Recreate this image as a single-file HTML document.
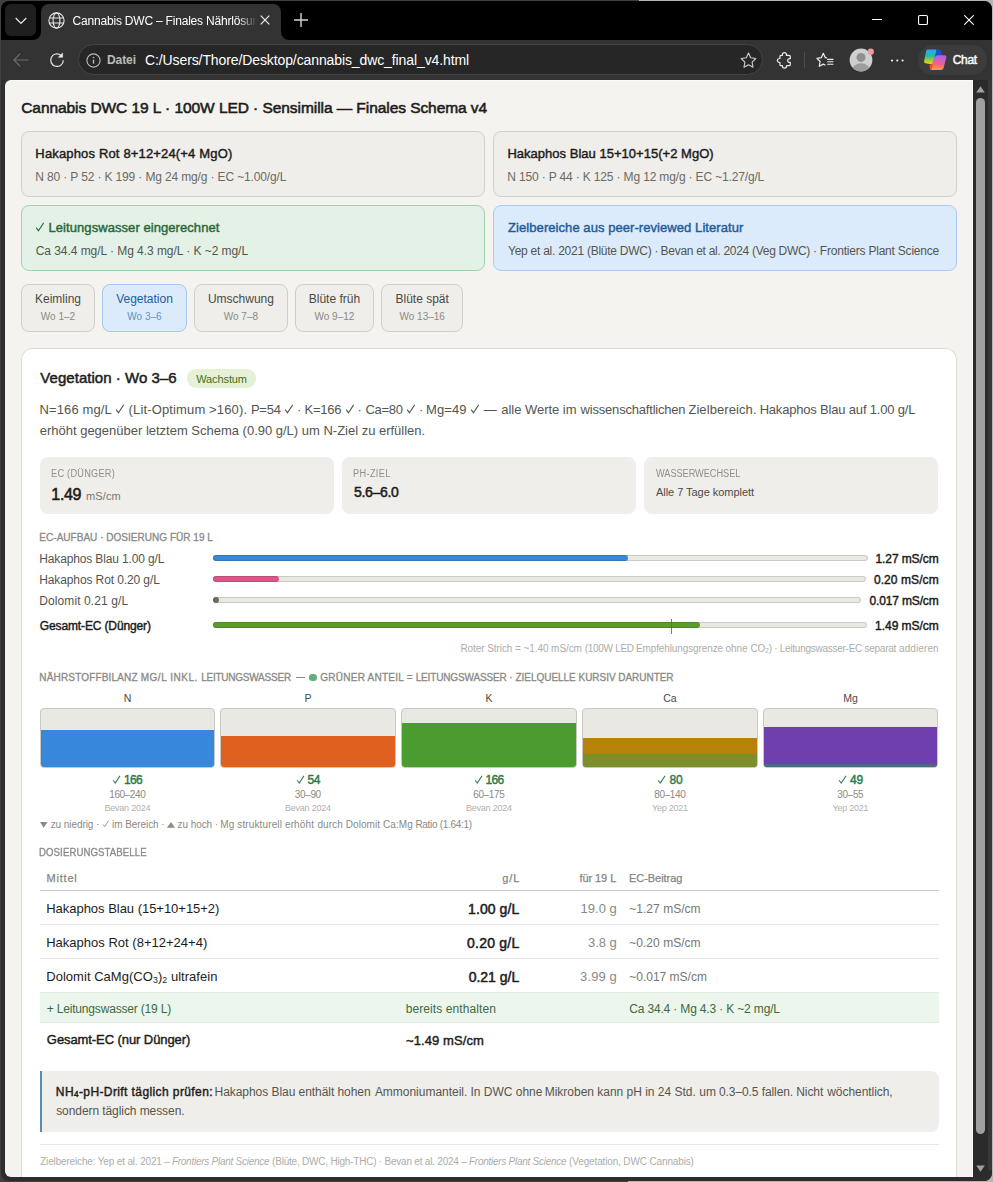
<!DOCTYPE html>
<html lang="de"><head><meta charset="utf-8"><title>Cannabis DWC – Finales Nährlösungsschema</title>
<style>
html,body{margin:0;padding:0;width:993px;height:1182px;overflow:hidden;background:#404040;}
#root{position:relative;width:993px;height:1182px;overflow:hidden;background:linear-gradient(90deg,#404040 0,#404040 639px,#b4b4b4 639px,#b4b4b4 100%);font-family:"Liberation Sans", sans-serif;}
.t{position:absolute;white-space:pre;font-family:"Liberation Sans", sans-serif;}
.ck{display:inline-block;width:0.74em;height:0.78em;vertical-align:-0.02em;overflow:visible}
sub.s{font-size:0.68em;vertical-align:-0.18em;line-height:0;}
</style></head>
<body>
<div id="root">
<div style="position:absolute;left:1px;top:1.2px;width:990.7px;height:1179.5px;border-radius:8px;background:#383838;overflow:hidden"></div>
<div style="position:absolute;left:628.00px;top:1180.50px;width:12.00px;height:1.50px;box-sizing:border-box;background:#b4b4b4;"></div>
<div style="position:absolute;left:1px;top:1.2px;width:990.7px;height:38.8px;border-radius:8px 8px 0 0;background:#000"></div>
<div style="position:absolute;left:1.00px;top:40.00px;width:990.70px;height:40.00px;box-sizing:border-box;background:#333333;"></div>
<div style="position:absolute;left:1.00px;top:80.00px;width:4.00px;height:1092.00px;box-sizing:border-box;background:#2f2f2f;"></div>
<div style="position:absolute;left:1px;top:1170px;width:990.7px;height:10.7px;border-radius:0 0 8px 8px;background:#2c2c2c"></div>
<div style="position:absolute;left:5.00px;top:4.00px;width:31.00px;height:32.00px;box-sizing:border-box;background:#1f1f1f;border-radius:6px;"></div>
<svg style="position:absolute;left:14.5px;top:16.5px" width="12" height="8" viewBox="0 0 12 8"><path d="M0.7 1 L6 6.4 L11.3 1" fill="none" stroke="#e6e6e6" stroke-width="1.25"/></svg>
<div style="position:absolute;left:41px;top:4px;width:240px;height:37px;background:#333333;border-radius:8px 8px 0 0"></div>
<svg style="position:absolute;left:33px;top:32px" width="8" height="8" viewBox="0 0 8 8"><path d="M8 0 L8 8 L0 8 A8 8 0 0 0 8 0Z" fill="#333333"/></svg>
<svg style="position:absolute;left:281px;top:32px" width="8" height="8" viewBox="0 0 8 8"><path d="M0 0 L0 8 L8 8 A8 8 0 0 1 0 0Z" fill="#333333"/></svg>
<svg style="position:absolute;left:48px;top:12px" width="17" height="17" viewBox="0 0 17 17" fill="none" stroke="#e8e8e8" stroke-width="1.1"><circle cx="8.5" cy="8.5" r="7.6"/><ellipse cx="8.5" cy="8.5" rx="3.4" ry="7.6"/><path d="M1.4 6 H15.6 M1.4 11 H15.6"/></svg>
<div class="t" style="top:15px;font-size:12px;line-height:12px;color:#ffffff;left:72.59px;width:184px;overflow:hidden;-webkit-mask-image:linear-gradient(90deg,#000 166px,transparent 184px);mask-image:linear-gradient(90deg,#000 166px,transparent 184px);letter-spacing:-0.2px;"><span id="tabt">Cannabis DWC – Finales</span> Nährlösungsschema</div>
<svg style="position:absolute;left:260px;top:15.2px" width="10" height="10" viewBox="0 0 10 10"><path d="M0.7 0.7 L9.3 9.3 M9.3 0.7 L0.7 9.3" stroke="#f0f0f0" stroke-width="1.2"/></svg>
<svg style="position:absolute;left:294px;top:13px" width="14" height="14" viewBox="0 0 14 14"><path d="M7 0 V14 M0 7 H14" stroke="#d4d4d4" stroke-width="1.4"/></svg>
<div style="position:absolute;left:872.00px;top:18.80px;width:10.00px;height:1.20px;box-sizing:border-box;background:#fff;"></div>
<svg style="position:absolute;left:918px;top:15px" width="10" height="10" viewBox="0 0 10 10"><rect x="0.55" y="0.55" width="8.9" height="8.9" rx="1.3" fill="none" stroke="#fff" stroke-width="1.1"/></svg>
<svg style="position:absolute;left:964px;top:15px" width="10" height="10" viewBox="0 0 10 10"><path d="M0.3 0.3 L9.7 9.7 M9.7 0.3 L0.3 9.7" stroke="#fff" stroke-width="1.1"/></svg>
<svg style="position:absolute;left:13px;top:53px" width="16" height="14" viewBox="0 0 16 14" fill="none" stroke="#6e6e6e" stroke-width="1.2"><path d="M7.2 0.6 L0.9 7 L7.2 13.4 M0.9 7 H15.6"/></svg>
<svg style="position:absolute;left:49px;top:52px" width="16" height="16" viewBox="0 0 16 16" fill="none" stroke="#e9e9e9" stroke-width="1.2"><path d="M14.3 8.2 A6.3 6.3 0 1 1 11.9 3.2"/><path d="M13.6 1.0 V5.2 H9.4 Z" fill="#e9e9e9" stroke-width="0.6" stroke-linejoin="round"/></svg>
<div style="position:absolute;left:77.80px;top:44.20px;width:685.60px;height:31.00px;box-sizing:border-box;background:#262626;border:1px solid #454545;border-radius:15.5px;"></div>
<svg style="position:absolute;left:85.5px;top:52.5px" width="15" height="15" viewBox="0 0 15 15" fill="none" stroke="#bcbcbc" stroke-width="1.1"><circle cx="7.5" cy="7.5" r="6.6"/><path d="M7.5 6.7 V10.6" stroke-width="1.4"/><circle cx="7.5" cy="4.5" r="0.8" fill="#bcbcbc" stroke="none"/></svg>
<div class="t" style="letter-spacing:-0.073px;top:54px;font-size:12px;line-height:12px;color:#bdbdbd;font-weight:700;left:107.00px;">Datei</div>
<div class="t" style="letter-spacing:-0.104px;top:53px;font-size:14px;line-height:14px;color:#ffffff;left:144.99px;">C:/Users/Thore/Desktop/cannabis_dwc_final_v4.html</div>
<svg style="position:absolute;left:739.5px;top:51.6px" width="17" height="17" viewBox="0 0 17 17" fill="none" stroke="#cdcdcd" stroke-width="1.1" stroke-linejoin="round"><path d="M8.5 1.1 L10.7 5.8 L15.8 6.5 L12.1 10.1 L13 15.2 L8.5 12.7 L4 15.2 L4.9 10.1 L1.2 6.5 L6.3 5.8 Z"/></svg>
<svg style="position:absolute;left:776px;top:51px" width="17" height="18" viewBox="0 0 17 18" fill="none" stroke="#ececec" stroke-width="1.2" stroke-linejoin="round"><path d="M6.4 4.3 V3.6 a2 2 0 0 1 4 0 V4.3 H13 a1.3 1.3 0 0 1 1.3 1.3 V7.6 H13.6 a1.9 1.9 0 0 0 0 3.8 H14.3 V13.4 a1.3 1.3 0 0 1 -1.3 1.3 H10.6 V15 a2.1 2.1 0 0 1 -4.2 0 V14.7 H5.2 a1.3 1.3 0 0 1 -1.3 -1.3 V11.5 H3.4 a2 2 0 0 1 0 -4 H3.9 V5.6 A1.3 1.3 0 0 1 5.2 4.3 Z"/></svg>
<div style="position:absolute;left:804.20px;top:52.00px;width:1.00px;height:16.00px;box-sizing:border-box;background:#4c4c4c;"></div>
<svg style="position:absolute;left:816px;top:51.5px" width="18" height="17" viewBox="0 0 18 17" fill="none" stroke="#ececec" stroke-width="1.2" stroke-linejoin="round" stroke-linecap="round"><path d="M10.6 5.9 L9.3 5.7 L7.3 1.3 L5.3 5.7 L0.9 6.3 L4.1 9.5 L3.3 14.3 L7.3 12.1 L9 13"/><path d="M11.6 7.4 H17 M11.6 9.8 H17 M11.6 12.2 H17" stroke-width="1.1"/></svg>
<svg style="position:absolute;left:849px;top:48px" width="25" height="24" viewBox="0 0 25 24"><defs><clipPath id="pc"><circle cx="12" cy="12" r="11.4"/></clipPath></defs><circle cx="12" cy="12" r="11.4" fill="#cfcfcf"/><g clip-path="url(#pc)"><circle cx="12" cy="9.4" r="4.5" fill="#8f8f8f"/><ellipse cx="12" cy="21.8" rx="8.6" ry="6.6" fill="#9d9d9d"/></g><circle cx="21.8" cy="3.7" r="3.1" fill="#f09c9c"/></svg>
<svg style="position:absolute;left:889.8px;top:58.5px" width="15" height="3" viewBox="0 0 15 3" fill="#f0f0f0"><circle cx="2" cy="1.5" r="1.1"/><circle cx="7.3" cy="1.5" r="1.1"/><circle cx="12.6" cy="1.5" r="1.1"/></svg>
<div style="position:absolute;left:918.00px;top:45.00px;width:69.40px;height:29.50px;box-sizing:border-box;background:#3c3c3c;border-radius:15px;"></div>
<svg style="position:absolute;left:918px;top:44px" width="32" height="32" viewBox="0 0 32 32"><defs><linearGradient id="cg1" x1="0" y1="0" x2="0" y2="1"><stop offset="0" stop-color="#2aa4f8"/><stop offset="0.45" stop-color="#22c0a0"/><stop offset="0.7" stop-color="#9ccc30"/><stop offset="1" stop-color="#f5d020"/></linearGradient><linearGradient id="cg2" x1="0.3" y1="0" x2="0.1" y2="1"><stop offset="0" stop-color="#b060ea"/><stop offset="0.5" stop-color="#f0608e"/><stop offset="1" stop-color="#ffa23c"/></linearGradient></defs><path d="M17 5.5 H21 Q22.8 5.6 23.2 7.4 L24.2 11.6 L19 12 L16 14 Z" fill="#1b50c8"/><path d="M9.6 5.6 H17.4 Q18.6 5.6 18.3 6.9 L15.1 18.9 Q14.7 20.4 13.2 20.2 L7.3 19.3 Q5.7 18.8 6.1 17 L8.1 7.2 Q8.5 5.6 9.6 5.6 Z" fill="url(#cg1)"/><path d="M19.6 11.3 H26.6 Q28.8 11.5 28.3 13.6 L25.6 24 Q25 26 23 26 H13.6 Q12 26 12.2 24 L16.6 13.4 Q17.5 11.5 19.6 11.3Z" fill="url(#cg2)"/><path d="M11.8 20.4 L15.2 20 L13.6 26 Q11.6 25.7 11.7 23.6Z" fill="#f0502e"/></svg>
<div class="t" style="letter-spacing:-0.361px;top:54px;font-size:12px;line-height:12px;color:#ffffff;-webkit-text-stroke:0.42px currentColor;left:952.80px;">Chat</div>
<div style="position:absolute;left:5px;top:80px;width:968px;height:1097px;background:#f4f3ef;border-radius:6px 0 0 6px"></div>
<div style="position:absolute;left:972.00px;top:80.00px;width:1.00px;height:1097.00px;box-sizing:border-box;background:#fbfbfa;"></div>
<div style="position:absolute;left:10.00px;top:80.00px;width:963.00px;height:1.00px;box-sizing:border-box;background:#fafaf8;"></div>
<div style="position:absolute;left:973.00px;top:80.00px;width:15.00px;height:1097.00px;box-sizing:border-box;background:#2b2b2b;"></div>
<div style="position:absolute;left:976.00px;top:97.80px;width:9.10px;height:1036.20px;box-sizing:border-box;background:#a0a0a0;border-radius:4.5px;"></div>
<svg style="position:absolute;left:976px;top:85.5px" width="9" height="7" viewBox="0 0 9 7"><path d="M4.5 0.3 L8.8 6.6 H0.2Z" fill="#a0a0a0"/></svg>
<svg style="position:absolute;left:976px;top:1164.5px" width="9" height="7" viewBox="0 0 9 7"><path d="M4.5 6.7 L8.8 0.4 H0.2Z" fill="#a0a0a0"/></svg>
<div class="t" style="letter-spacing:-0.063px;top:100px;font-size:15.5px;line-height:15.5px;color:#1c1c1a;-webkit-text-stroke:0.55px currentColor;left:21.19px;">Cannabis DWC 19 L · 100W LED · Sensimilla — Finales Schema v4</div>
<div style="position:absolute;left:21.00px;top:131.00px;width:464.00px;height:66.00px;box-sizing:border-box;border:1px solid #d0cfca;border-radius:8px;background:#efeeea;"></div>
<div style="position:absolute;left:493.00px;top:131.00px;width:464.00px;height:66.00px;box-sizing:border-box;border:1px solid #d0cfca;border-radius:8px;background:#efeeea;"></div>
<div style="position:absolute;left:21.00px;top:205.00px;width:464.00px;height:66.00px;box-sizing:border-box;border:1px solid #9fd3a8;border-radius:8px;background:#e4f1e6;"></div>
<div style="position:absolute;left:493.00px;top:205.00px;width:464.00px;height:66.00px;box-sizing:border-box;border:1px solid #a9cdf0;border-radius:8px;background:#dcebfb;"></div>
<div class="t" style="letter-spacing:0.161px;top:147px;font-size:13px;line-height:13px;color:#1c1c1a;-webkit-text-stroke:0.42px currentColor;left:35.34px;">Hakaphos Rot 8+12+24(+4 MgO)</div>
<div class="t" style="letter-spacing:-0.141px;top:171px;font-size:12px;line-height:12px;color:#6b6b66;left:35.32px;">N 80 · P 52 · K 199 · Mg 24 mg/g · EC ~1.00/g/L</div>
<div class="t" style="letter-spacing:0.019px;top:147px;font-size:13px;line-height:13px;color:#1c1c1a;-webkit-text-stroke:0.42px currentColor;left:507.44px;">Hakaphos Blau 15+10+15(+2 MgO)</div>
<div class="t" style="letter-spacing:-0.155px;top:171px;font-size:12px;line-height:12px;color:#6b6b66;left:507.32px;">N 150 · P 44 · K 125 · Mg 12 mg/g · EC ~1.27/g/L</div>
<div class="t" style="letter-spacing:0.067px;top:221px;font-size:13px;line-height:13px;color:#27683a;-webkit-text-stroke:0.42px currentColor;left:35.24px;"><svg class="ck" viewBox="0 0 10 10" preserveAspectRatio="none"><path d="M1.2 5.6 L3.6 8.6 L9 0.9" fill="none" stroke="currentColor" stroke-width="1.1"/></svg> Leitungswasser eingerechnet</div>
<div class="t" style="letter-spacing:-0.049px;top:245px;font-size:12px;line-height:12px;color:#55554f;left:35.69px;">Ca 34.4 mg/L · Mg 4.3 mg/L · K ~2 mg/L</div>
<div class="t" style="letter-spacing:0.065px;top:221px;font-size:13px;line-height:13px;color:#1d5c9c;-webkit-text-stroke:0.42px currentColor;left:508.10px;">Zielbereiche aus peer-reviewed Literatur</div>
<div class="t" style="letter-spacing:-0.256px;top:245px;font-size:12px;line-height:12px;color:#55554f;left:508.04px;">Yep et al. 2021 (Blüte DWC) · </div>
<div class="t" style="letter-spacing:-0.296px;top:245px;font-size:12px;line-height:12px;color:#55554f;left:660.62px;">Bevan et al. 2024 (Veg DWC) · </div>
<div class="t" style="letter-spacing:-0.211px;top:245px;font-size:12px;line-height:12px;color:#55554f;left:819.82px;">Frontiers Plant Science</div>
<div style="position:absolute;left:21.00px;top:284.00px;width:74.00px;height:48.00px;box-sizing:border-box;border:1px solid #cfcec9;border-radius:8px;background:#efeeea;"></div>
<div class="t" style="top:293px;font-size:12px;line-height:12px;color:#4a4a46;left:-242.00px;width:600px;text-align:center;"><span>Keimling</span></div>
<div class="t" style="top:312px;font-size:10px;line-height:10px;color:#8a8a85;left:-242.00px;width:600px;text-align:center;"><span>Wo 1–2</span></div>
<div style="position:absolute;left:101.80px;top:284.00px;width:85.40px;height:48.00px;box-sizing:border-box;border:1px solid #a6c8ee;border-radius:8px;background:#dcebfb;"></div>
<div class="t" style="top:293px;font-size:12px;line-height:12px;color:#1d5c9c;left:-155.50px;width:600px;text-align:center;"><span>Vegetation</span></div>
<div class="t" style="top:312px;font-size:10px;line-height:10px;color:#5f93c8;left:-155.50px;width:600px;text-align:center;"><span>Wo 3–6</span></div>
<div style="position:absolute;left:194.00px;top:284.00px;width:93.80px;height:48.00px;box-sizing:border-box;border:1px solid #cfcec9;border-radius:8px;background:#efeeea;"></div>
<div class="t" style="top:293px;font-size:12px;line-height:12px;color:#4a4a46;left:-59.10px;width:600px;text-align:center;"><span>Umschwung</span></div>
<div class="t" style="top:312px;font-size:10px;line-height:10px;color:#8a8a85;left:-59.10px;width:600px;text-align:center;"><span>Wo 7–8</span></div>
<div style="position:absolute;left:295.00px;top:284.00px;width:78.90px;height:48.00px;box-sizing:border-box;border:1px solid #cfcec9;border-radius:8px;background:#efeeea;"></div>
<div class="t" style="top:293px;font-size:12px;line-height:12px;color:#4a4a46;left:34.45px;width:600px;text-align:center;"><span>Blüte früh</span></div>
<div class="t" style="top:312px;font-size:10px;line-height:10px;color:#8a8a85;left:34.45px;width:600px;text-align:center;"><span>Wo 9–12</span></div>
<div style="position:absolute;left:381.10px;top:284.00px;width:82.20px;height:48.00px;box-sizing:border-box;border:1px solid #cfcec9;border-radius:8px;background:#efeeea;"></div>
<div class="t" style="top:293px;font-size:12px;line-height:12px;color:#4a4a46;left:122.20px;width:600px;text-align:center;"><span>Blüte spät</span></div>
<div class="t" style="top:312px;font-size:10px;line-height:10px;color:#8a8a85;left:122.20px;width:600px;text-align:center;"><span>Wo 13–16</span></div>
<div style="position:absolute;left:21px;top:348px;width:936px;height:829px;box-sizing:border-box;background:#fff;border:1px solid #dddcd7;border-bottom:none;border-radius:12px 12px 0 0"></div>
<div class="t" style="letter-spacing:0.033px;top:370px;font-size:15px;line-height:15px;color:#1c1c1a;-webkit-text-stroke:0.48px currentColor;left:40.37px;">Vegetation · Wo 3–6</div>
<div style="position:absolute;left:186.70px;top:369.00px;width:69.60px;height:19.00px;box-sizing:border-box;background:#e6f0d5;border-radius:9px;"></div>
<div class="t" style="letter-spacing:-0.110px;top:374px;font-size:11px;line-height:11px;color:#43701f;left:196.25px;">Wachstum</div>
<div class="t" style="letter-spacing:0.137px;top:403px;font-size:13px;line-height:13px;color:#55554f;left:39.43px;">N=166 mg/L <svg class="ck" viewBox="0 0 10 10" preserveAspectRatio="none"><path d="M1.2 5.6 L3.6 8.6 L9 0.9" fill="none" stroke="currentColor" stroke-width="1.1"/></svg> (Lit-Optimum &gt;160). </div>
<div class="t" style="letter-spacing:-0.239px;top:403px;font-size:13px;line-height:13px;color:#55554f;left:250.93px;">P=54 <svg class="ck" viewBox="0 0 10 10" preserveAspectRatio="none"><path d="M1.2 5.6 L3.6 8.6 L9 0.9" fill="none" stroke="currentColor" stroke-width="1.1"/></svg> · </div>
<div class="t" style="letter-spacing:-0.250px;top:403px;font-size:13px;line-height:13px;color:#55554f;left:304.53px;">K=166 <svg class="ck" viewBox="0 0 10 10" preserveAspectRatio="none"><path d="M1.2 5.6 L3.6 8.6 L9 0.9" fill="none" stroke="currentColor" stroke-width="1.1"/></svg> · </div>
<div class="t" style="letter-spacing:-0.285px;top:403px;font-size:13px;line-height:13px;color:#55554f;left:365.44px;">Ca=80 <svg class="ck" viewBox="0 0 10 10" preserveAspectRatio="none"><path d="M1.2 5.6 L3.6 8.6 L9 0.9" fill="none" stroke="currentColor" stroke-width="1.1"/></svg> · </div>
<div class="t" style="letter-spacing:0.136px;top:403px;font-size:13px;line-height:13px;color:#55554f;left:425.93px;">Mg=49 <svg class="ck" viewBox="0 0 10 10" preserveAspectRatio="none"><path d="M1.2 5.6 L3.6 8.6 L9 0.9" fill="none" stroke="currentColor" stroke-width="1.1"/></svg> — </div>
<div class="t" style="letter-spacing:-0.031px;top:403px;font-size:13px;line-height:13px;color:#55554f;left:501.25px;">alle Werte im </div>
<div class="t" style="letter-spacing:-0.200px;top:403px;font-size:13px;line-height:13px;color:#55554f;left:580.62px;">wissenschaftlichen </div>
<div class="t" style="letter-spacing:0.084px;top:403px;font-size:13px;line-height:13px;color:#55554f;left:688.39px;">Zielbereich. </div>
<div class="t" style="letter-spacing:-0.186px;top:403px;font-size:13px;line-height:13px;color:#55554f;left:759.63px;">Hakaphos Blau auf 1.00 g/L</div>
<div class="t" style="letter-spacing:-0.007px;top:424px;font-size:13px;line-height:13px;color:#55554f;left:39.75px;">erhöht gegenüber letztem Schema (0.90 g/L) um N-Ziel zu erfüllen.</div>
<div style="position:absolute;left:40.00px;top:457.00px;width:294.30px;height:57.00px;box-sizing:border-box;background:#f0eeea;border-radius:8px;"></div>
<div style="position:absolute;left:342.20px;top:457.00px;width:293.80px;height:57.00px;box-sizing:border-box;background:#f0eeea;border-radius:8px;"></div>
<div style="position:absolute;left:643.70px;top:457.00px;width:294.60px;height:57.00px;box-sizing:border-box;background:#f0eeea;border-radius:8px;"></div>
<div class="t" style="letter-spacing:0.270px;top:469px;font-size:10px;line-height:10px;color:#8f8f8a;transform:scaleX(0.92);transform-origin:0 0;left:51.45px;">EC (DÜNGER)</div>
<div class="t" style="letter-spacing:0.378px;top:469px;font-size:10px;line-height:10px;color:#8f8f8a;transform:scaleX(0.92);transform-origin:0 0;left:353.45px;">PH-ZIEL</div>
<div class="t" style="letter-spacing:-0.047px;top:469px;font-size:10px;line-height:10px;color:#8f8f8a;transform:scaleX(0.92);transform-origin:0 0;left:655.96px;">WASSERWECHSEL</div>
<div class="t" style="letter-spacing:-0.338px;top:487px;font-size:16px;line-height:16px;color:#1c1c1a;-webkit-text-stroke:0.55px currentColor;left:51.36px;">1.49</div>
<div class="t" style="letter-spacing:0.105px;top:491px;font-size:11px;line-height:11px;color:#77776f;left:86.07px;">mS/cm</div>
<div class="t" style="letter-spacing:-0.285px;top:485px;font-size:14px;line-height:14px;color:#1c1c1a;-webkit-text-stroke:0.50px currentColor;left:353.89px;">5.6–6.0</div>
<div class="t" style="letter-spacing:-0.040px;top:487px;font-size:11px;line-height:11px;color:#4a4a46;left:655.98px;">Alle 7 Tage komplett</div>
<div class="t" style="letter-spacing:0.026px;top:533px;font-size:10px;line-height:10px;color:#8a8a85;-webkit-text-stroke:0.30px currentColor;left:39.33px;">EC-AUFBAU · DOSIERUNG FÜR 19 L</div>
<div class="t" style="letter-spacing:-0.139px;top:553px;font-size:12px;line-height:12px;color:#55554f;left:39.22px;">Hakaphos Blau 1.00 g/L</div>
<div style="position:absolute;left:213.20px;top:555.30px;width:654.50px;height:6.00px;box-sizing:border-box;background:#e9e8e3;border-radius:3px;"></div>
<div style="position:absolute;left:213.20px;top:555.30px;width:414.70px;height:6.00px;box-sizing:border-box;background:#3a88dd;border-radius:3px;"></div>
<div style="position:absolute;left:213.20px;top:555.30px;width:654.50px;height:6.00px;box-sizing:border-box;border:1px solid rgba(0,0,0,0.13);border-radius:3px;"></div>
<div class="t" style="letter-spacing:-0.094px;top:553px;font-size:12px;line-height:12px;color:#1c1c1a;-webkit-text-stroke:0.42px currentColor;right:54.41px;">1.27 mS/cm</div>
<div class="t" style="letter-spacing:-0.108px;top:574px;font-size:12px;line-height:12px;color:#55554f;left:39.22px;">Hakaphos Rot 0.20 g/L</div>
<div style="position:absolute;left:213.20px;top:576.30px;width:652.80px;height:6.00px;box-sizing:border-box;background:#e9e8e3;border-radius:3px;"></div>
<div style="position:absolute;left:213.20px;top:576.30px;width:66.00px;height:6.00px;box-sizing:border-box;background:#d8588a;border-radius:3px;"></div>
<div style="position:absolute;left:213.20px;top:576.30px;width:652.80px;height:6.00px;box-sizing:border-box;border:1px solid rgba(0,0,0,0.13);border-radius:3px;"></div>
<div class="t" style="letter-spacing:0.079px;top:574px;font-size:12px;line-height:12px;color:#1c1c1a;-webkit-text-stroke:0.42px currentColor;right:54.24px;">0.20 mS/cm</div>
<div class="t" style="letter-spacing:0.106px;top:595px;font-size:12px;line-height:12px;color:#55554f;left:39.22px;">Dolomit 0.21 g/L</div>
<div style="position:absolute;left:213.20px;top:597.30px;width:647.40px;height:6.00px;box-sizing:border-box;background:#e9e8e3;border-radius:3px;"></div>
<div style="position:absolute;left:213.20px;top:597.30px;width:5.60px;height:6.00px;box-sizing:border-box;background:#6e6e60;border-radius:3px;"></div>
<div style="position:absolute;left:213.20px;top:597.30px;width:647.40px;height:6.00px;box-sizing:border-box;border:1px solid rgba(0,0,0,0.13);border-radius:3px;"></div>
<div class="t" style="letter-spacing:-0.156px;top:595px;font-size:12px;line-height:12px;color:#1c1c1a;-webkit-text-stroke:0.42px currentColor;right:54.48px;">0.017 mS/cm</div>
<div class="t" style="letter-spacing:-0.132px;top:620px;font-size:12px;line-height:12px;color:#1c1c1a;-webkit-text-stroke:0.42px currentColor;left:39.81px;">Gesamt-EC (Dünger)</div>
<div style="position:absolute;left:213.20px;top:622.30px;width:653.80px;height:6.00px;box-sizing:border-box;background:#e9e8e3;border-radius:3px;"></div>
<div style="position:absolute;left:213.20px;top:622.30px;width:486.70px;height:6.00px;box-sizing:border-box;background:#5b9d2c;border-radius:3px;"></div>
<div style="position:absolute;left:213.20px;top:622.30px;width:653.80px;height:6.00px;box-sizing:border-box;border:1px solid rgba(0,0,0,0.13);border-radius:3px;"></div>
<div class="t" style="letter-spacing:-0.050px;top:620px;font-size:12px;line-height:12px;color:#1c1c1a;-webkit-text-stroke:0.42px currentColor;right:54.37px;">1.49 mS/cm</div>
<div style="position:absolute;left:671.00px;top:619.00px;width:1.00px;height:14.60px;box-sizing:border-box;background:rgba(192,57,43,0.85);"></div>
<div class="t" style="letter-spacing:-0.077px;top:644px;font-size:10px;line-height:10px;color:#adada8;left:460.48px;">Roter Strich = ~1.40 mS/cm </div>
<div class="t" style="letter-spacing:-0.307px;top:644px;font-size:10px;line-height:10px;color:#adada8;left:584.78px;">(100W LED </div>
<div class="t" style="letter-spacing:-0.115px;top:644px;font-size:10px;line-height:10px;color:#adada8;left:635.98px;">Empfehlungsgrenze ohne </div>
<div class="t" style="letter-spacing:-0.186px;top:644px;font-size:10px;line-height:10px;color:#adada8;left:750.39px;">CO<sub class="s">2</sub>) · </div>
<div class="t" style="letter-spacing:-0.263px;top:644px;font-size:10px;line-height:10px;color:#adada8;left:779.78px;">Leitungswasser-EC separat </div>
<div class="t" style="letter-spacing:0.107px;top:644px;font-size:10px;line-height:10px;color:#adada8;left:898.98px;">addieren</div>
<div class="t" style="letter-spacing:0.168px;top:673px;font-size:10px;line-height:10px;color:#8a8a85;-webkit-text-stroke:0.30px currentColor;left:39.33px;">NÄHRSTOFFBILANZ </div>
<div class="t" style="letter-spacing:0.522px;top:673px;font-size:10px;line-height:10px;color:#8a8a85;-webkit-text-stroke:0.30px currentColor;left:140.73px;">MG/L INKL. </div>
<div class="t" style="letter-spacing:-0.231px;top:673px;font-size:10px;line-height:10px;color:#8a8a85;-webkit-text-stroke:0.30px currentColor;left:201.13px;">LEITUNGSWASSER</div>
<div style="position:absolute;left:295.80px;top:677.00px;width:9.30px;height:1.00px;box-sizing:border-box;background:#8a8a85;"></div>
<div style="position:absolute;left:309.20px;top:673.70px;width:7.80px;height:7.80px;box-sizing:border-box;background:#5fae7b;border-radius:50%;"></div>
<div class="t" style="letter-spacing:0.256px;top:673px;font-size:10px;line-height:10px;color:#8a8a85;-webkit-text-stroke:0.30px currentColor;left:320.25px;">GRÜNER ANTEIL = </div>
<div class="t" style="letter-spacing:-0.146px;top:673px;font-size:10px;line-height:10px;color:#8a8a85;-webkit-text-stroke:0.30px currentColor;left:415.63px;">LEITUNGSWASSER · </div>
<div class="t" style="letter-spacing:-0.034px;top:673px;font-size:10px;line-height:10px;color:#8a8a85;-webkit-text-stroke:0.30px currentColor;left:515.53px;">ZIELQUELLE KURSIV DARUNTER</div>
<div class="t" style="top:693px;font-size:10.5px;line-height:10.5px;color:#4a4a46;left:-172.50px;width:600px;text-align:center;"><span>N</span></div>
<div style="position:absolute;left:40.00px;top:708px;width:175.00px;height:60px;box-sizing:border-box;border:1px solid #c9c8c3;border-radius:4px;background:#e9e8e3;overflow:hidden"><div style="position:absolute;left:0;right:0;top:21.00px;bottom:0;background:#3787dc"></div></div>
<div class="t" style="top:774px;font-size:12px;line-height:12px;color:#2b7a4b;-webkit-text-stroke:0.42px currentColor;left:-172.50px;width:600px;text-align:center;"><span style="letter-spacing:-0.582px;margin-right:0.582px"><svg class="ck" viewBox="0 0 10 10" preserveAspectRatio="none"><path d="M1.2 5.6 L3.6 8.6 L9 0.9" fill="none" stroke="currentColor" stroke-width="1.1"/></svg> 166</span></div>
<div class="t" style="top:790px;font-size:10px;line-height:10px;color:#8a8a85;left:-172.50px;width:600px;text-align:center;"><span style="letter-spacing:-0.414px;margin-right:0.414px">160–240</span></div>
<div class="t" style="top:804px;font-size:9px;line-height:9px;color:#b0b0ab;left:-172.50px;width:600px;text-align:center;"><span style="letter-spacing:-0.216px;margin-right:0.216px">Bevan 2024</span></div>
<div class="t" style="top:693px;font-size:10.5px;line-height:10.5px;color:#4a4a46;left:8.00px;width:600px;text-align:center;"><span>P</span></div>
<div style="position:absolute;left:220.00px;top:708px;width:176.00px;height:60px;box-sizing:border-box;border:1px solid #c9c8c3;border-radius:4px;background:#e9e8e3;overflow:hidden"><div style="position:absolute;left:0;right:0;top:27.00px;bottom:0;background:#e06020"></div></div>
<div class="t" style="top:774px;font-size:12px;line-height:12px;color:#2b7a4b;-webkit-text-stroke:0.42px currentColor;left:8.00px;width:600px;text-align:center;"><span style="letter-spacing:-0.275px;margin-right:0.275px"><svg class="ck" viewBox="0 0 10 10" preserveAspectRatio="none"><path d="M1.2 5.6 L3.6 8.6 L9 0.9" fill="none" stroke="currentColor" stroke-width="1.1"/></svg> 54</span></div>
<div class="t" style="top:790px;font-size:10px;line-height:10px;color:#8a8a85;left:8.00px;width:600px;text-align:center;"><span style="letter-spacing:-0.385px;margin-right:0.385px">30–90</span></div>
<div class="t" style="top:804px;font-size:9px;line-height:9px;color:#b0b0ab;left:8.00px;width:600px;text-align:center;"><span style="letter-spacing:-0.216px;margin-right:0.216px">Bevan 2024</span></div>
<div class="t" style="top:693px;font-size:10.5px;line-height:10.5px;color:#4a4a46;left:189.00px;width:600px;text-align:center;"><span>K</span></div>
<div style="position:absolute;left:401.00px;top:708px;width:176.00px;height:60px;box-sizing:border-box;border:1px solid #c9c8c3;border-radius:4px;background:#e9e8e3;overflow:hidden"><div style="position:absolute;left:0;right:0;top:14.00px;bottom:0;background:#4a9c2f"></div></div>
<div class="t" style="top:774px;font-size:12px;line-height:12px;color:#2b7a4b;-webkit-text-stroke:0.42px currentColor;left:189.00px;width:600px;text-align:center;"><span style="letter-spacing:-0.582px;margin-right:0.582px"><svg class="ck" viewBox="0 0 10 10" preserveAspectRatio="none"><path d="M1.2 5.6 L3.6 8.6 L9 0.9" fill="none" stroke="currentColor" stroke-width="1.1"/></svg> 166</span></div>
<div class="t" style="top:790px;font-size:10px;line-height:10px;color:#8a8a85;left:189.00px;width:600px;text-align:center;"><span style="letter-spacing:-0.349px;margin-right:0.349px">60–175</span></div>
<div class="t" style="top:804px;font-size:9px;line-height:9px;color:#b0b0ab;left:189.00px;width:600px;text-align:center;"><span style="letter-spacing:-0.216px;margin-right:0.216px">Bevan 2024</span></div>
<div class="t" style="top:693px;font-size:10.5px;line-height:10.5px;color:#4a4a46;left:370.00px;width:600px;text-align:center;"><span>Ca</span></div>
<div style="position:absolute;left:582.00px;top:708px;width:176.00px;height:60px;box-sizing:border-box;border:1px solid #c9c8c3;border-radius:4px;background:#e9e8e3;overflow:hidden"><div style="position:absolute;left:0;right:0;top:29.00px;bottom:0;background:#b8820a"></div><div style="position:absolute;left:0;right:0;top:45.00px;bottom:0;background:#7b8f2a"></div></div>
<div class="t" style="top:774px;font-size:12px;line-height:12px;color:#2b7a4b;-webkit-text-stroke:0.42px currentColor;left:370.00px;width:600px;text-align:center;"><span style="letter-spacing:-0.217px;margin-right:0.217px"><svg class="ck" viewBox="0 0 10 10" preserveAspectRatio="none"><path d="M1.2 5.6 L3.6 8.6 L9 0.9" fill="none" stroke="currentColor" stroke-width="1.1"/></svg> 80</span></div>
<div class="t" style="top:790px;font-size:10px;line-height:10px;color:#8a8a85;left:370.00px;width:600px;text-align:center;"><span style="letter-spacing:-0.370px;margin-right:0.370px">80–140</span></div>
<div class="t" style="top:804px;font-size:9px;line-height:9px;color:#b0b0ab;left:370.00px;width:600px;text-align:center;"><span style="letter-spacing:-0.269px;margin-right:0.269px">Yep 2021</span></div>
<div class="t" style="top:693px;font-size:10.5px;line-height:10.5px;color:#4a4a46;left:550.50px;width:600px;text-align:center;"><span>Mg</span></div>
<div style="position:absolute;left:763.00px;top:708px;width:175.00px;height:60px;box-sizing:border-box;border:1px solid #c9c8c3;border-radius:4px;background:#e9e8e3;overflow:hidden"><div style="position:absolute;left:0;right:0;top:18.00px;bottom:0;background:#6f3fae"></div><div style="position:absolute;left:0;right:0;top:55.30px;bottom:0;background:#4d6a80"></div></div>
<div class="t" style="top:774px;font-size:12px;line-height:12px;color:#2b7a4b;-webkit-text-stroke:0.42px currentColor;left:550.50px;width:600px;text-align:center;"><span style="letter-spacing:-0.167px;margin-right:0.167px"><svg class="ck" viewBox="0 0 10 10" preserveAspectRatio="none"><path d="M1.2 5.6 L3.6 8.6 L9 0.9" fill="none" stroke="currentColor" stroke-width="1.1"/></svg> 49</span></div>
<div class="t" style="top:790px;font-size:10px;line-height:10px;color:#8a8a85;left:550.50px;width:600px;text-align:center;"><span style="letter-spacing:-0.378px;margin-right:0.378px">30–55</span></div>
<div class="t" style="top:804px;font-size:9px;line-height:9px;color:#b0b0ab;left:550.50px;width:600px;text-align:center;"><span style="letter-spacing:-0.269px;margin-right:0.269px">Yep 2021</span></div>
<svg style="position:absolute;left:40.4px;top:822px" width="7.4" height="5.8" viewBox="0 0 7.4 5.8"><path d="M0 0 H7.4 L3.7 5.8Z" fill="#8a8a85"/></svg>
<svg style="position:absolute;left:167px;top:822px" width="8" height="5.8" viewBox="0 0 8 5.8"><path d="M0 5.8 H8 L4 0Z" fill="#8a8a85"/></svg>
<div class="t" style="letter-spacing:-0.075px;top:820px;font-size:10px;line-height:10px;color:#8a8a85;left:50.69px;">zu niedrig · <svg class="ck" viewBox="0 0 10 10" preserveAspectRatio="none"><path d="M1.2 5.6 L3.6 8.6 L9 0.9" fill="none" stroke="currentColor" stroke-width="1.1"/></svg> im Bereich ·</div>
<div class="t" style="letter-spacing:-0.082px;top:820px;font-size:10px;line-height:10px;color:#8a8a85;left:177.59px;">zu hoch · </div>
<div class="t" style="letter-spacing:0.126px;top:820px;font-size:10px;line-height:10px;color:#8a8a85;left:220.28px;">Mg strukturell erhöht </div>
<div class="t" style="letter-spacing:0.085px;top:820px;font-size:10px;line-height:10px;color:#8a8a85;left:317.38px;">durch Dolomit Ca:Mg </div>
<div class="t" style="letter-spacing:-0.289px;top:820px;font-size:10px;line-height:10px;color:#8a8a85;left:415.38px;">Ratio (1.64:1)</div>
<div class="t" style="letter-spacing:0.106px;top:848px;font-size:10px;line-height:10px;color:#8a8a85;-webkit-text-stroke:0.30px currentColor;transform:scaleX(0.96);transform-origin:0 0;left:39.36px;">DOSIERUNGSTABELLE</div>
<div class="t" style="letter-spacing:0.821px;top:873px;font-size:11px;line-height:11px;color:#86867f;-webkit-text-stroke:0.25px currentColor;left:46.42px;">Mittel</div>
<div class="t" style="letter-spacing:0.890px;top:873px;font-size:11px;line-height:11px;color:#86867f;-webkit-text-stroke:0.25px currentColor;right:472.87px;">g/L</div>
<div class="t" style="letter-spacing:-0.077px;top:873px;font-size:11px;line-height:11px;color:#86867f;-webkit-text-stroke:0.25px currentColor;right:376.84px;">für 19 L</div>
<div class="t" style="letter-spacing:-0.048px;top:873px;font-size:11px;line-height:11px;color:#86867f;-webkit-text-stroke:0.25px currentColor;left:629.02px;">EC-Beitrag</div>
<div style="position:absolute;left:40.00px;top:890.00px;width:898.50px;height:1.00px;box-sizing:border-box;background:#cfcec9;"></div>
<div style="position:absolute;left:40.00px;top:924.00px;width:898.50px;height:1.00px;box-sizing:border-box;background:#e9e8e4;"></div>
<div style="position:absolute;left:40.00px;top:958.00px;width:898.50px;height:1.00px;box-sizing:border-box;background:#e9e8e4;"></div>
<div style="position:absolute;left:40.00px;top:992.00px;width:898.50px;height:31.30px;box-sizing:border-box;background:#edf6ec;border-top:1px solid #e3ece2;border-bottom:1px solid #e3ece2;"></div>
<div class="t" style="letter-spacing:-0.026px;top:902px;font-size:13px;line-height:13px;color:#1c1c1a;left:46.23px;">Hakaphos Blau (15+10+15+2)</div>
<div class="t" style="letter-spacing:0.075px;top:902px;font-size:14px;line-height:14px;color:#1c1c1a;-webkit-text-stroke:0.50px currentColor;right:473.71px;">1.00 g/L</div>
<div class="t" style="letter-spacing:0.034px;top:902px;font-size:13px;line-height:13px;color:#8a8a85;right:376.13px;">19.0 g</div>
<div class="t" style="letter-spacing:0.030px;top:903px;font-size:12px;line-height:12px;color:#77776f;left:629.26px;">~1.27 mS/cm</div>
<div class="t" style="letter-spacing:0.011px;top:936px;font-size:13px;line-height:13px;color:#1c1c1a;left:46.23px;">Hakaphos Rot (8+12+24+4)</div>
<div class="t" style="letter-spacing:0.215px;top:936px;font-size:14px;line-height:14px;color:#1c1c1a;-webkit-text-stroke:0.50px currentColor;right:473.57px;">0.20 g/L</div>
<div class="t" style="letter-spacing:-0.022px;top:936px;font-size:13px;line-height:13px;color:#8a8a85;right:376.18px;">3.8 g</div>
<div class="t" style="letter-spacing:0.030px;top:937px;font-size:12px;line-height:12px;color:#77776f;left:629.26px;">~0.20 mS/cm</div>
<div class="t" style="letter-spacing:0.036px;top:970px;font-size:13px;line-height:13px;color:#1c1c1a;left:46.23px;">Dolomit CaMg(CO<sub class="s">3</sub>)<sub class="s">2</sub> ultrafein</div>
<div class="t" style="letter-spacing:0.000px;top:970px;font-size:14px;line-height:14px;color:#1c1c1a;-webkit-text-stroke:0.50px currentColor;right:473.78px;">0.21 g/L</div>
<div class="t" style="letter-spacing:0.135px;top:970px;font-size:13px;line-height:13px;color:#8a8a85;right:376.03px;">3.99 g</div>
<div class="t" style="letter-spacing:-0.007px;top:971px;font-size:12px;line-height:12px;color:#77776f;left:629.26px;">~0.017 mS/cm</div>
<div class="t" style="letter-spacing:-0.176px;top:1003px;font-size:12px;line-height:12px;color:#3b6b3f;left:46.71px;">+ Leitungswasser (19 L)</div>
<div class="t" style="letter-spacing:0.095px;top:1003px;font-size:12px;line-height:12px;color:#3b6b3f;left:405.63px;">bereits enthalten</div>
<div class="t" style="letter-spacing:-0.158px;top:1003px;font-size:12px;line-height:12px;color:#3b6b3f;left:629.19px;">Ca 34.4 · Mg 4.3 · K ~2 mg/L</div>
<div class="t" style="letter-spacing:-0.085px;top:1033px;font-size:13px;line-height:13px;color:#1c1c1a;-webkit-text-stroke:0.42px currentColor;left:46.86px;">Gesamt-EC (nur Dünger)</div>
<div class="t" style="letter-spacing:0.097px;top:1034px;font-size:13px;line-height:13px;color:#1c1c1a;-webkit-text-stroke:0.42px currentColor;left:406.03px;">~1.49 mS/cm</div>
<div style="position:absolute;left:40.00px;top:1071.00px;width:898.50px;height:60.50px;box-sizing:border-box;background:#f0eeea;border-left:2px solid #5a8bb7;border-radius:0 8px 8px 0;"></div>
<div class="t" style="letter-spacing:0.401px;top:1086px;font-size:12px;line-height:12px;color:#1c1c1a;-webkit-text-stroke:0.42px currentColor;left:55.83px;">NH<sub class="s">4</sub>-pH-Drift täglich prüfen:</div>
<div class="t" style="letter-spacing:-0.050px;top:1086px;font-size:12px;line-height:12px;color:#55554f;left:214.52px;">Hakaphos Blau enthält hohen </div>
<div class="t" style="letter-spacing:-0.022px;top:1086px;font-size:12px;line-height:12px;color:#55554f;left:374.88px;">Ammoniumanteil. In DWC ohne </div>
<div class="t" style="letter-spacing:-0.013px;top:1086px;font-size:12px;line-height:12px;color:#55554f;left:544.72px;">Mikroben kann pH in 24 Std. </div>
<div class="t" style="letter-spacing:-0.092px;top:1086px;font-size:12px;line-height:12px;color:#55554f;left:699.32px;">um 0.3–0.5 fallen. Nicht </div>
<div class="t" style="letter-spacing:-0.053px;top:1086px;font-size:12px;line-height:12px;color:#55554f;left:827.22px;">wöchentlich,</div>
<div class="t" style="letter-spacing:-0.075px;top:1105px;font-size:12px;line-height:12px;color:#55554f;left:56.17px;">sondern täglich messen.</div>
<div style="position:absolute;left:40.00px;top:1144.00px;width:898.50px;height:1.00px;box-sizing:border-box;background:#e9e8e4;"></div>
<div class="t" style="letter-spacing:-0.160px;top:1157px;font-size:10px;line-height:10px;color:#adada8;left:40.18px;">Zielbereiche: Yep et al. 2021 – </div>
<div class="t" style="letter-spacing:-0.257px;top:1157px;font-size:10px;line-height:10px;color:#adada8;font-style:italic;left:171.88px;">Frontiers Plant Science </div>
<div class="t" style="letter-spacing:-0.214px;top:1157px;font-size:10px;line-height:10px;color:#adada8;left:272.08px;">(Blüte, DWC, High-THC) · Bevan et al. 2024 – </div>
<div class="t" style="letter-spacing:-0.261px;top:1157px;font-size:10px;line-height:10px;color:#adada8;font-style:italic;left:468.98px;">Frontiers Plant Science </div>
<div class="t" style="letter-spacing:-0.143px;top:1157px;font-size:10px;line-height:10px;color:#adada8;left:569.08px;">(Vegetation, DWC Cannabis)</div>
</div>
</body></html>
